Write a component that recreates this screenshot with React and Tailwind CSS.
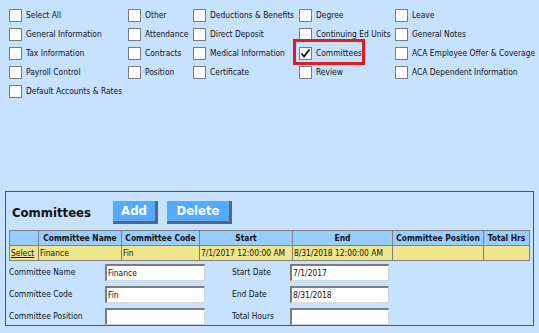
import React from "react";

const F = "font-['DejaVu_Sans_Condensed','DejaVu_Sans',sans-serif]";

function Box({ checked }) {
  return (
    <span className="relative inline-block w-[13px] h-[13px] shrink-0 bg-white border border-[#7a7a7a]">
      {checked && (
        <svg viewBox="0 0 13 13" className="absolute left-[-1px] top-[-1px] w-[13px] h-[13px]">
          <path d="M2.5 6.5 L5 9.5 L10.5 2.5" fill="none" stroke="#111" strokeWidth="1.8" />
        </svg>
      )}
    </span>
  );
}

function Item({ label, checked }) {
  return (
    <div className="flex items-center h-[19px] whitespace-nowrap">
      <Box checked={checked} />
      <span className="ml-[4px] text-[8.4px] leading-none text-[#111]">{label}</span>
    </div>
  );
}

const cols = [
  { w: "w-[119px]", items: ["Select All", "General Information", "Tax Information", "Payroll Control", "Default Accounts & Rates"] },
  { w: "w-[65px]", items: ["Other", "Attendance", "Contracts", "Position"] },
  { w: "w-[106px]", items: ["Deductions & Benefits", "Direct Deposit", "Medical Information", "Certificate"] },
  { w: "w-[96px]", items: ["Degree", "Continuing Ed Units", "Committees", "Review"] },
  { w: "w-[140px]", items: ["Leave", "General Notes", "ACA Employee Offer & Coverage", "ACA Dependent Information"] },
];

function Input({ value }) {
  return (
    <div className="h-[17px] bg-white border-t-2 border-l-2 border-t-[#7d7d7d] border-l-[#7d7d7d] border-b border-r border-b-[#d8d8d8] border-r-[#d8d8d8] flex items-center pl-[1px] text-[8.4px] text-[#111]">
      {value}
    </div>
  );
}

function Btn({ children, w }) {
  return (
    <div className={`${w} h-[23px] bg-[#55aaff] border-r-[3px] border-b-[3px] border-r-[#4f6a86] border-b-[#4f6a86] flex items-center justify-center text-white font-bold text-[13px] leading-none`}>
      {children}
    </div>
  );
}

export default function App() {
  const th = "border border-[#808080] bg-[#99ccff] font-bold text-[8.4px] text-center h-[15px] p-0 leading-none whitespace-nowrap";
  const td = "border border-[#808080] bg-[#f0e68c] text-[8.4px] text-left h-[15px] px-[1px] py-0 leading-none whitespace-nowrap";
  return (
    <div className={`${F} w-[539px] h-[333px] bg-[#c6e2ff] overflow-hidden text-[#111]`}>
      <div className="relative h-[191px] pt-[6px] pl-[9px]">
        <div className="flex">
          {cols.map((c, i) => (
            <div key={i} className={`${c.w} shrink-0 flex flex-col`}>
              {c.items.map((l) => (
                <Item key={l} label={l} checked={l === "Committees"} />
              ))}
            </div>
          ))}
        </div>
        <div className="absolute left-[293px] top-[39px] w-[72px] h-[26px] border-[3px] border-[#e31b23]" />
      </div>

      <div className="ml-[5px] w-[529px] h-[135px] border border-[#3d4fb0] flex flex-col">
        <div className="flex items-center h-[32px] pt-[8px]">
          <div className="ml-[6px] w-[101px] text-[13px] font-bold leading-none">Committees</div>
          <Btn w="w-[45px]">Add</Btn>
          <div className="w-[9px]" />
          <Btn w="w-[65px]">Delete</Btn>
        </div>
        <table className="ml-[3px] mt-[6px] w-[520px] border-collapse table-fixed">
          <colgroup>
            <col className="w-[29px]" />
            <col className="w-[83px]" />
            <col className="w-[78px]" />
            <col className="w-[93px]" />
            <col className="w-[100px]" />
            <col className="w-[91px]" />
            <col className="w-[46px]" />
          </colgroup>
          <thead>
            <tr>
              <th className={th}></th>
              <th className={th}>Committee Name</th>
              <th className={th}>Committee Code</th>
              <th className={th}>Start</th>
              <th className={th}>End</th>
              <th className={th}>Committee Position</th>
              <th className={th}>Total Hrs</th>
            </tr>
          </thead>
          <tbody>
            <tr>
              <td className={td}><span className="underline">Select</span></td>
              <td className={td}>Finance</td>
              <td className={td}>Fin</td>
              <td className={td}>7/1/2017 12:00:00 AM</td>
              <td className={td}>8/31/2018 12:00:00 AM</td>
              <td className={td}></td>
              <td className={td}></td>
            </tr>
          </tbody>
        </table>
        <div className="mt-[3px] ml-[3px] grid grid-cols-[96px_100px_27px_58px_99px] gap-y-[5px] items-center text-[8.4px]">
          <div>Committee Name</div>
          <Input value="Finance" />
          <div />
          <div>Start Date</div>
          <Input value="7/1/2017" />
          <div>Committee Code</div>
          <Input value="Fin" />
          <div />
          <div>End Date</div>
          <Input value="8/31/2018" />
          <div>Committee Position</div>
          <Input value="" />
          <div />
          <div>Total Hours</div>
          <Input value="" />
        </div>
      </div>
    </div>
  );
}
